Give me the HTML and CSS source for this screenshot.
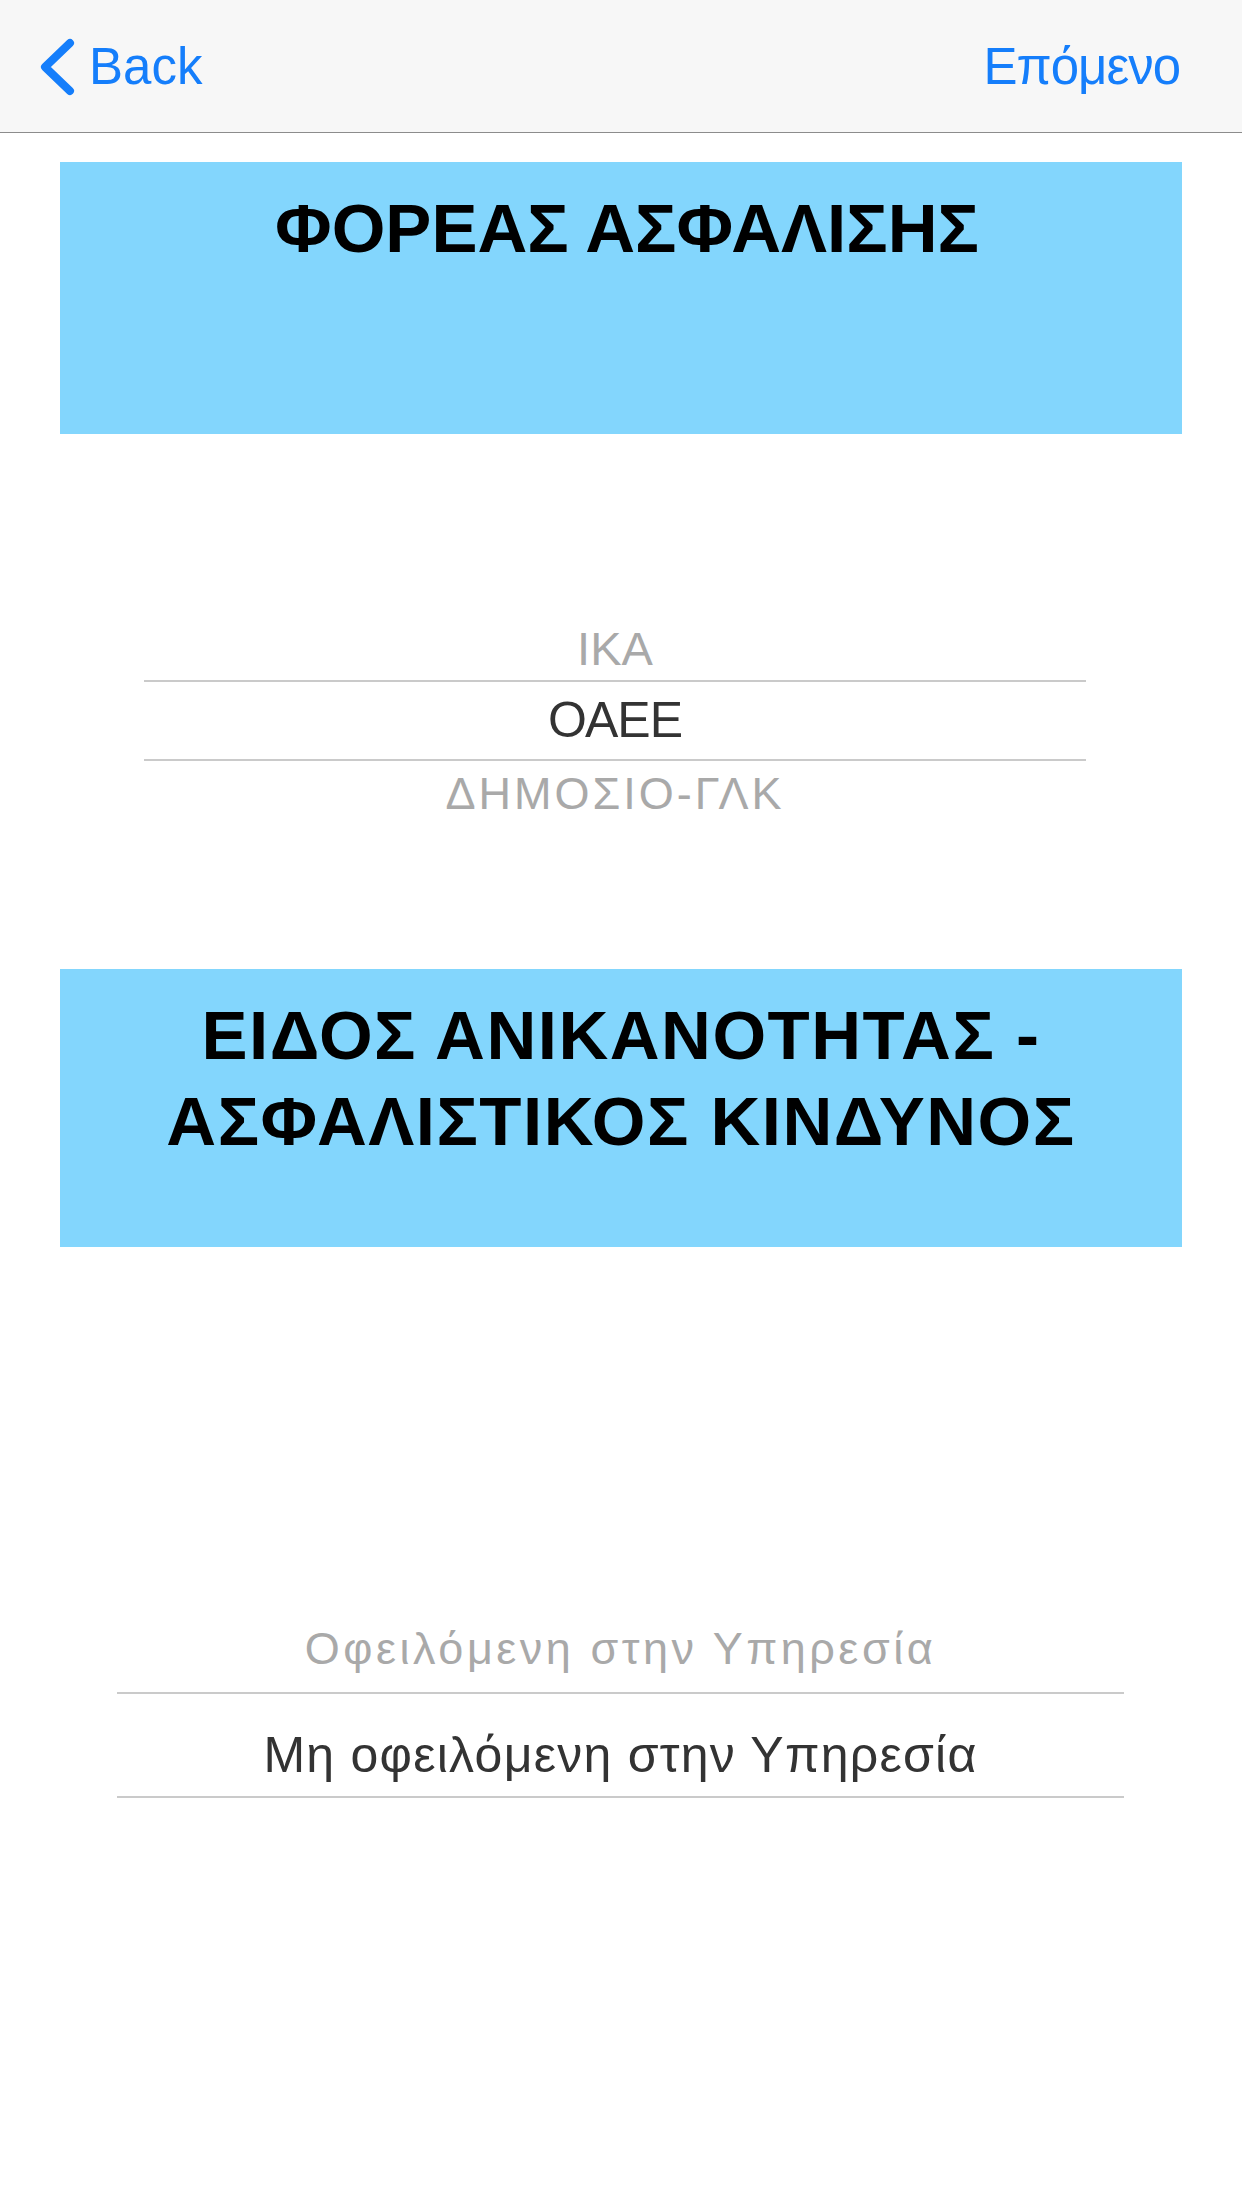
FILE: index.html
```html
<!DOCTYPE html>
<html lang="el">
<head>
<meta charset="utf-8">
<title>Φορέας ασφάλισης</title>
<link rel="stylesheet" href="styles.css">
</head>
<body>
<header class="nav">
  <div class="nav-back">
    <svg class="chevron" width="40" height="64" viewBox="0 0 40 64" aria-hidden="true">
      <path d="M34 8 L9 32 L34 56" fill="none" stroke="#157efb" stroke-width="8" stroke-linecap="round" stroke-linejoin="round"/>
    </svg>
    <span class="nav-label">Back</span>
  </div>
  <span class="nav-label nav-next">Επόμενο</span>
</header>
<main class="content">
  <section class="banner banner-first">
    <h2 class="banner-title">ΦΟΡΕΑΣ ΑΣΦΑΛΙΣΗΣ</h2>
  </section>

  <div class="picker picker-one">
    <div class="p1-above">ΙΚΑ</div>
    <div class="p1-selected">ΟΑΕΕ</div>
    <div class="p1-below">ΔΗΜΟΣΙΟ-ΓΛΚ</div>
  </div>

  <section class="banner banner-second">
    <h2 class="banner-title">ΕΙΔΟΣ ΑΝΙΚΑΝΟΤΗΤΑΣ -<br>ΑΣΦΑΛΙΣΤΙΚΟΣ ΚΙΝΔΥΝΟΣ</h2>
  </section>

  <div class="picker picker-two">
    <div class="p2-above">Οφειλόμενη στην Υπηρεσία</div>
    <div class="p2-selected">Μη οφειλόμενη στην Υπηρεσία</div>
  </div>
</main>
</body>
</html>
```

FILE: styles.css
```css
* {
  box-sizing: border-box;
}

html, body {
  margin: 0;
  padding: 0;
  background: #ffffff;
}

body {
  width: 1242px;
  height: 2208px;
  overflow: hidden;
  font-family: "Liberation Sans", Arial, "Noto Sans", sans-serif;
}

.nav {
  height: 133px;
  background: #f7f7f7;
  border-bottom: 1px solid #8c8c8c;
  display: flex;
  align-items: center;
  justify-content: space-between;
  padding: 2px 62px 0 36px;
}

.nav-back {
  display: flex;
  align-items: center;
  gap: 13px;
}

.chevron {
  display: block;
}

.nav-label {
  color: #157efb;
  font-size: 51px;
  line-height: 60px;
}

.nav-next {
  letter-spacing: -1px;
}

.content {
  display: flex;
  flex-direction: column;
}

.banner {
  margin: 0 60px;
  background: #83d6fd;
  padding-top: 24px;
  text-align: center;
}

.banner-first {
  margin-top: 29px;
  height: 272px;
  padding-left: 12px;
}

.banner-second {
  margin-top: 142px;
  height: 278px;
}

.banner-title {
  margin: 0;
  font-size: 69px;
  line-height: 86px;
  font-weight: bold;
  color: #000000;
}

.banner-second .banner-title {
  letter-spacing: 1.5px;
}

.picker {
  display: flex;
  flex-direction: column;
  text-align: center;
}

.picker-one {
  margin: 183px 0 0 144px;
  width: 942px;
}

.p1-above {
  font-size: 47px;
  line-height: 63px;
  color: #a9a9a9;
}

.p1-selected {
  border-top: 2px solid #cacaca;
  border-bottom: 2px solid #cacaca;
  font-size: 50px;
  line-height: 77px;
  letter-spacing: -1px;
  color: #333333;
}

.p1-below {
  font-size: 45px;
  line-height: 66px;
  letter-spacing: 3px;
  color: #a9a9a9;
}

.picker-two {
  margin: 359px 0 0 117px;
  width: 1007px;
}

.p2-above {
  font-size: 45px;
  line-height: 86px;
  letter-spacing: 3.5px;
  color: #a9a9a9;
}

.p2-selected {
  border-top: 2px solid #cacaca;
  border-bottom: 2px solid #cacaca;
  padding-top: 20px;
  font-size: 50px;
  line-height: 82px;
  letter-spacing: 1.25px;
  color: #333333;
}
```
